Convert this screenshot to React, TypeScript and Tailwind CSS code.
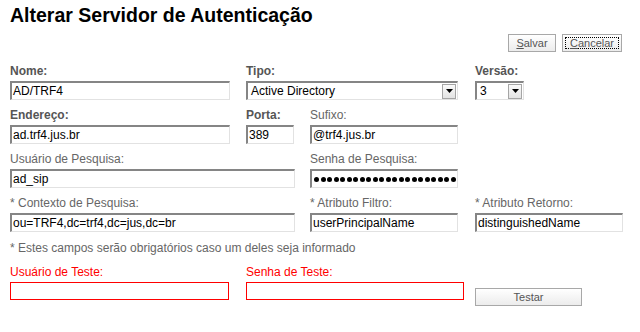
import React from "react";

const inputBox =
  "h-[19px] bg-white border-t-2 border-l-2 border-r border-b border-t-[#858585] border-l-[#858585] border-r-[#e2e2e2] border-b-[#e2e2e2] pl-[1px] text-[12px] leading-[16px] text-black flex items-center whitespace-nowrap overflow-hidden";

function Label({ children, bold, red }: { children: React.ReactNode; bold?: boolean; red?: boolean }) {
  const cls = red
    ? "text-[#ff0000]"
    : bold
    ? "font-bold text-[#555555]"
    : "text-[#666666]";
  return <div className={`h-[14px] text-[12px] leading-[14px] whitespace-nowrap ${cls}`}>{children}</div>;
}

function Input({ w, value }: { w: string; value?: string }) {
  return (
    <div className={`${inputBox} mt-[3px] ${w}`}>
      <span>{value}</span>
    </div>
  );
}

function Arrow() {
  return (
    <div className="ml-auto mr-[1px] h-[15px] w-[14px] border border-[#a5a5a5] bg-gradient-to-b from-[#fafafa] to-[#e3e3e3] flex items-center justify-center">
      <svg width="7" height="4" viewBox="0 0 7 4">
        <path d="M0 0 H7 L3.5 4 Z" fill="#000" />
      </svg>
    </div>
  );
}

function Select({ w, value }: { w: string; value: string }) {
  return (
    <div className={`${inputBox} mt-[3px] ${w} pr-0`}>
      <span className="pl-[2px]">{value}</span>
      <Arrow />
    </div>
  );
}

export default function App() {
  return (
    <div
      className="w-[640px] h-[332px] bg-white px-[10px] overflow-hidden"
      style={{ fontFamily: '"Liberation Sans", Arial, sans-serif' }}
    >
      <h1 className="pt-[4px] text-[19.5px] leading-[22px] font-bold text-black">
        Alterar Servidor de Autenticação
      </h1>
      <div className="mt-[8px] mr-[8px] flex justify-end gap-[6px]">
        <button className="h-[18px] w-[48px] border border-[#a8a8a8] bg-gradient-to-b from-white to-[#ececec] text-[11px] leading-[14px] text-[#555555]">
          <span className="underline">S</span>alvar
        </button>
        <button className="h-[18px] w-[60px] border border-[#a8a8a8] bg-gradient-to-b from-white to-[#ececec] p-[2px] text-[11px] leading-[12px] text-[#555555]">
          <span className="flex h-full w-full items-center justify-center border border-dotted border-black">
            <span className="underline">C</span>ancelar
          </span>
        </button>
      </div>

      <div className="mt-[12px] flex flex-col gap-[8px]">
        <div className="flex">
          <div className="w-[236px]">
            <Label bold>Nome:</Label>
            <Input w="w-[220px]" value="AD/TRF4" />
          </div>
          <div className="w-[229px]">
            <Label bold>Tipo:</Label>
            <Select w="w-[212px]" value="Active Directory" />
          </div>
          <div>
            <Label bold>Versão:</Label>
            <Select w="w-[49px]" value="3" />
          </div>
        </div>

        <div className="flex">
          <div className="w-[236px]">
            <Label bold>Endereço:</Label>
            <Input w="w-[220px]" value="ad.trf4.jus.br" />
          </div>
          <div className="w-[64px]">
            <Label bold>Porta:</Label>
            <Input w="w-[48px]" value="389" />
          </div>
          <div>
            <Label>Sufixo:</Label>
            <Input w="w-[148px]" value="@trf4.jus.br" />
          </div>
        </div>

        <div className="flex">
          <div className="w-[300px]">
            <Label>Usuário de Pesquisa:</Label>
            <Input w="w-[285px]" value="ad_sip" />
          </div>
          <div>
            <Label>Senha de Pesquisa:</Label>
            <div className={`${inputBox} mt-[3px] w-[148px]`}>
              <div className="ml-[1px] flex gap-[1.5px]">
                {Array.from({ length: 22 }).map((_, i) => (
                  <span key={i} className="block h-[5px] w-[5px] rounded-full bg-black" />
                ))}
              </div>
            </div>
          </div>
        </div>

        <div className="flex">
          <div className="w-[300px]">
            <Label>* Contexto de Pesquisa:</Label>
            <Input w="w-[285px]" value="ou=TRF4,dc=trf4,dc=jus,dc=br" />
          </div>
          <div className="w-[165px]">
            <Label>* Atributo Filtro:</Label>
            <Input w="w-[148px]" value="userPrincipalName" />
          </div>
          <div>
            <Label>* Atributo Retorno:</Label>
            <Input w="w-[148px]" value="distinguishedName" />
          </div>
        </div>
      </div>

      <div className="mt-[9px] h-[14px] text-[12px] leading-[14px] text-[#666666]">
        * Estes campos serão obrigatórios caso um deles seja informado
      </div>

      <div className="mt-[10px] flex">
        <div className="w-[236px]">
          <Label red>Usuário de Teste:</Label>
          <div className="mt-[3px] h-[18px] w-[219px] border border-[#ff0000] bg-white" />
        </div>
        <div className="w-[229px]">
          <Label red>Senha de Teste:</Label>
          <div className="mt-[3px] h-[18px] w-[218px] border border-[#ff0000] bg-white" />
        </div>
        <div className="pt-[19px]">
          <button className="h-[18px] w-[107px] border border-[#a8a8a8] bg-gradient-to-b from-white to-[#ececec] text-[11px] leading-[14px] text-[#555555]">
            Testar
          </button>
        </div>
      </div>
    </div>
  );
}
